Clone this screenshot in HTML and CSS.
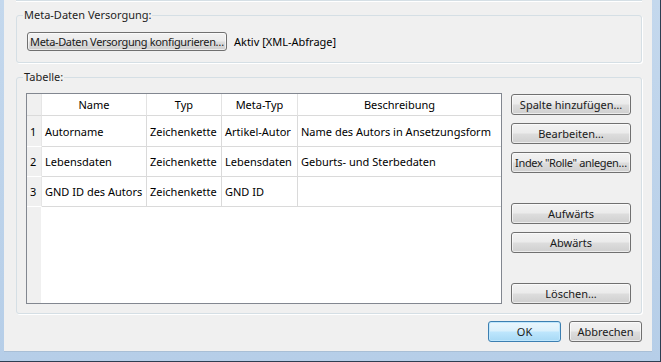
FILE: index.html
```html
<!DOCTYPE html>
<html lang="de">
  <head>
    <meta charset="UTF-8">
    <title>Tabelle bearbeiten</title>
    <link rel="stylesheet" href="styles.css">
  </head>
  <body>
    <div class="frame">
      <div class="client">
        <!-- bottom edge of the group box above -->
        <div class="prev-box"></div>

        <!-- Meta-Daten -->
        <fieldset class="group group-meta">
          <legend>Meta-Daten Versorgung:</legend>
          <div class="meta-row">
            <button class="btn btn-config tight">Meta-Daten Versorgung konfigurieren…</button>
            <span class="status">Aktiv [XML-Abfrage]</span>
          </div>
        </fieldset>

        <!-- Tabelle -->
        <fieldset class="group group-table">
          <legend>Tabelle:</legend>
          <div class="table-row">
            <div class="grid">
              <div class="cell corner"></div>
              <div class="cell head">Name</div>
              <div class="cell head">Typ</div>
              <div class="cell head">Meta-Typ</div>
              <div class="cell head last">Beschreibung</div>

              <div class="cell num row-first">1</div>
              <div class="cell row-first">Autorname</div>
              <div class="cell row-first">Zeichenkette</div>
              <div class="cell row-first">Artikel-Autor</div>
              <div class="cell row-first last">Name des Autors in Ansetzungsform</div>

              <div class="cell num">2</div>
              <div class="cell">Lebensdaten</div>
              <div class="cell">Zeichenkette</div>
              <div class="cell">Lebensdaten</div>
              <div class="cell last">Geburts- und Sterbedaten</div>

              <div class="cell num">3</div>
              <div class="cell">GND ID des Autors</div>
              <div class="cell">Zeichenkette</div>
              <div class="cell">GND ID</div>
              <div class="cell last"></div>
            </div>

            <div class="side-buttons">
              <button class="btn side">Spalte hinzufügen…</button>
              <button class="btn side">Bearbeiten…</button>
              <button class="btn side tight">Index "Rolle" anlegen…</button>
              <button class="btn side move-first">Aufwärts</button>
              <button class="btn side">Abwärts</button>
              <button class="btn side delete">Löschen…</button>
            </div>
          </div>
        </fieldset>

        <div class="footer">
          <button class="btn dialog default">OK</button>
          <button class="btn dialog">Abbrechen</button>
        </div>
      </div>
    </div>
  </body>
</html>
```

FILE: styles.css
```css
/* Reset */
* {
  margin: 0;
  padding: 0;
  box-sizing: border-box;
  font-family: 'Noto Sans', 'Open Sans', sans-serif;
}

body {
  width: 661px;
  height: 362px;
  background-color: #2d3e52;
  overflow: hidden;
  font-size: 11px;
  color: #000;
}

/* Window frame */
.frame {
  width: 660px;
  height: 361px;
  padding: 0 8px 9px 4px;
  background: linear-gradient(to bottom, #c4d8ed, #b6cee8);
}

.client {
  display: flex;
  flex-direction: column;
  height: 352px;
  background-color: #f0f0f0;
  border-bottom: 1px solid #a9bfd6;
}

.prev-box {
  height: 1px;
  margin: 0 10px 0 12px;
  background-color: #d5dfe5;
  box-shadow: 0 1px 0 #fff;
}

/* Group boxes */
.group {
  margin: 7px 10px 0 12px;
  border: 1px solid #d5dfe5;
  border-radius: 3px;
  box-shadow: 1px 1px 0 #fff;
  min-width: 0;
}

.group legend {
  padding: 0 1px;
  line-height: 14px;
  color: #1e1e1e;
}

.group-meta {
  padding: 10px 10px 11px 10px;
}

.group-meta legend {
  margin-left: -4px;
}

.meta-row {
  display: flex;
  align-items: center;
  gap: 7px;
}

.group-table {
  padding: 9px 10px 9px 9px;
}

.group-table legend {
  margin-left: -3px;
}

.table-row {
  display: flex;
  gap: 9px;
}

/* Buttons */
.btn {
  height: 21px;
  padding: 0;
  font-size: 11px;
  font-weight: 400;
  white-space: nowrap;
  color: #1a1a1a;
  border: 1px solid #707070;
  border-radius: 3px;
  background: linear-gradient(to bottom, #f2f2f2 0%, #ebebeb 48%, #dddddd 52%, #cfcfcf 100%);
  box-shadow: inset 0 0 0 1px rgba(255, 255, 255, 0.6);
  cursor: pointer;
}

.btn.tight {
  letter-spacing: -0.35px;
}

.btn-config {
  width: 200px;
  height: 19px;
}

.side-buttons {
  display: flex;
  flex-direction: column;
  gap: 8px;
  padding-top: 1px;
}

.side {
  width: 120px;
}

.side.move-first {
  margin-top: 22px;
}

.side.delete {
  margin-top: 22px;
}

/* Table grid */
.grid {
  display: grid;
  grid-template-columns: 15px 105px 75px 76px 203px;
  grid-template-rows: 22px 31px 30px 30px;
  align-content: start;
  width: 476px;
  height: 211px;
  border: 1px solid #828790;
  background: linear-gradient(to right, #f0f0f0 14px, #fff 14px);
}

.cell {
  display: flex;
  align-items: center;
  padding-left: 3px;
  white-space: nowrap;
  overflow: hidden;
  background-color: #fff;
  border-right: 1px solid #dadada;
  border-bottom: 1px solid #dadada;
}

.cell.last {
  border-right: none;
}

.cell.head {
  justify-content: center;
  padding-left: 0;
  border-right-color: #e3e3e3;
}

.cell.corner,
.cell.num {
  background-color: #f0f0f0;
  border-right-color: #e6e6e6;
}

.cell.num {
  padding-left: 3px;
  border-bottom-color: #fff;
}

/* Footer */
.footer {
  display: flex;
  justify-content: flex-end;
  gap: 8px;
  margin: 7px 10px 0 0;
}

.dialog {
  width: 73px;
}

.dialog.default {
  border-color: #3c7fb1;
  background: linear-gradient(to bottom, #eaf6fd 0%, #d9f0fc 48%, #bee6fd 52%, #a7d9f5 100%);
  box-shadow: inset 0 0 0 1px #bfe7fd;
}
```
